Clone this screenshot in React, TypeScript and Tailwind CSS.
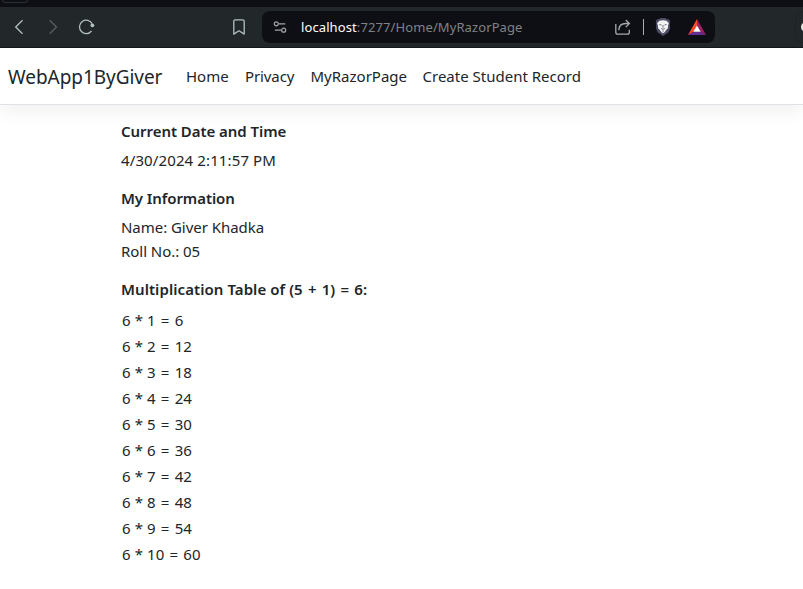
import React from "react";

const links = [
  { label: "Home", box: "w-[43px]" },
  { label: "Privacy", box: "w-[49.5px] tracking-[-0.1px]" },
  { label: "MyRazorPage", box: "w-[96px]" },
  { label: "Create Student Record", box: "w-[159px]" },
];

function BrowserBar() {
  return (
    <header className="h-12 bg-[#0e0f14] text-[#b1bec2]">
      <div className="flex h-[7px] items-start">
        <div className="ml-0.5 h-[3px] w-[26px] rounded-b-md border-x border-b border-[#2a2f33]" />
      </div>
      <div className="flex h-10 items-center overflow-hidden bg-[#22282a]">
        <svg className="ml-[11px] h-4 w-4 shrink-0" viewBox="0 0 16 16" fill="none" stroke="currentColor" strokeWidth="1.3">
          <path d="M11.5 1.2 4.7 8l6.8 6.8" />
        </svg>
        <svg className="ml-[18px] h-4 w-4 shrink-0 text-[#596063]" viewBox="0 0 16 16" fill="none" stroke="currentColor" strokeWidth="1.3">
          <path d="m4.7 1.2 6.8 6.8-6.8 6.8" />
        </svg>
        <svg className="ml-[17px] h-4 w-[18px] shrink-0" viewBox="0 0 18 16" fill="none" stroke="currentColor" strokeWidth="1.3">
          <path d="M14.1 4.6A6.7 6.7 0 1 0 13.5 12" />
          <circle cx="14.4" cy="6.3" r="1.9" fill="currentColor" stroke="none" />
        </svg>
        <svg className="ml-[137px] h-4 w-3 shrink-0" viewBox="0 0 12 16" fill="none" stroke="currentColor" strokeWidth="1.3" strokeLinejoin="round">
          <path d="M.8 15.1V2.3Q.8.8 2.3.8h7.4q1.5 0 1.5 1.5v12.8L6 11.8Z" />
        </svg>
        <div className="ml-[17px] flex h-8 w-[453px] shrink-0 items-center rounded-lg bg-[#0e0f14]">
          <svg className="ml-[11px] h-3 w-[14px] shrink-0 text-[#a0a5a8]" viewBox="0 0 14 12" fill="none" stroke="currentColor" strokeWidth="1.2">
            <circle cx="3.3" cy="2.8" r="2" />
            <path d="M6 2.8h6.2M1.8 9.2H8" />
            <circle cx="10.7" cy="9.2" r="2" />
          </svg>
          <div className="ml-[14px] w-[310px] whitespace-nowrap text-[13px] leading-5 tracking-[0.1px] text-[#7f8386]">
            <span className="text-white">localhost</span>:7277/Home/MyRazorPage
          </div>
          <svg className="ml-[4px] h-4 w-4 shrink-0 text-[#a3a9ac]" viewBox="0 0 16 16" fill="none" stroke="currentColor" strokeWidth="1.3">
            <path d="M.8 5v8.2q0 2 2 2h9.5q2 0 2-2v-2.5" />
            <path d="M3.8 11.2c.2-4.2 3-6.7 6.8-6.7H14M10.8 1l3.6 3.5-3.6 3.6" />
          </svg>
          <div className="ml-[12px] h-4 w-px bg-[#aaaeb0]" />
          <svg className="ml-[11px] h-[18px] w-4 shrink-0" viewBox="0 0 16 18">
            <path d="m4 1 1.8-1h4.4L12 1l2.2.5 1.2 2.3-.6 1.5.2 5-1.5 4L8 18l-5.5-3.7-1.5-4 .2-5-.6-1.5 1.2-2.3Z" fill="#4b4d62" />
            <path d="m4.5 2.8 3.5-.5 3.5.5 2.4 2.4-.8 2-.2 3-1.6 1.5-1.4 2.2L8 15.2l-1.9-1.3-1.4-2.2-1.6-1.5-.2-3-.8-2Z" fill="#f3f3f5" />
            <path d="m4.4 6.5 2.1.5M11.6 6.5 9.5 7M8 7v2.6M6.2 10.4l1.8.9 1.8-.9M7.2 13h1.6" fill="none" stroke="#4b4d62" strokeWidth=".8" />
          </svg>
          <svg className="ml-[17px] h-4 w-[18px] shrink-0" viewBox="0 0 18 16">
            <path d="M9 0 0 16l6-3.5L9 7Z" fill="#ff4b25" />
            <path d="m9 0 9 16-6-3.5L9 7Z" fill="#9e1f63" />
            <path d="M0 16h18l-6-3.5H6Z" fill="#662d91" />
            <path d="m9 6.4 3.7 6.3H5.3Z" fill="#fff" />
          </svg>
        </div>
        <div className="ml-[80px] flex h-8 w-8 shrink-0 items-center rounded-lg border border-[#1d2225]">
          <div className="ml-[5px] h-[10px] w-[10px] rounded-full bg-[#e6e8db]" />
        </div>
      </div>
      <div className="h-px bg-[#16191c]" />
    </header>
  );
}

function SiteNav() {
  return (
    <nav className="flex h-[57px] items-center border-b border-[#dee2e6] pl-2 shadow-[0_8px_16px_rgba(0,0,0,0.05)]">
      <div className="w-[154px] whitespace-nowrap pt-0.5 text-[19px] leading-[30px] tracking-[-0.05px]">WebApp1ByGiver</div>
      <div className="ml-6 flex gap-4 whitespace-nowrap leading-6">
        {links.map((link) => (
          <div key={link.label} className={link.box}>{link.label}</div>
        ))}
      </div>
    </nav>
  );
}

function Op({ children }: { children: string }) {
  return <span className="mx-[1.2px]">{children}</span>;
}

export default function App() {
  return (
    <div className="h-[589px] overflow-hidden bg-white font-['Noto_Sans','Open_Sans',sans-serif] text-[15px] text-[#212529]">
      <BrowserBar />
      <SiteNav />
      <main className="pl-[121px] pt-[17px] leading-6">
        <h1 className="mb-[7px] font-semibold leading-[19px] tracking-[-0.05px]">Current Date and Time</h1>
        <p className="mb-[17px] tracking-[0.12px]">4/30/2024 2:11:57 PM</p>
        <h1 className="mb-[7px] font-semibold leading-[19px] tracking-[-0.08px]">My Information</h1>
        <p className="mb-[17px] tracking-[-0.04px]">
          Name: Giver Khadka
          <br />
          Roll No.: 05
        </p>
        <h1 className="mb-2 font-semibold leading-[19px] tracking-[0.07px]">
          Multiplication Table of (5 <Op>+</Op> 1) <Op>=</Op> 6:
        </h1>
        <div className="pl-px">
          {Array.from({ length: 10 }, (_, i) => (
            <div key={i} className="h-[26px] pt-px tracking-[0.08px]">
              6 * {i + 1} <Op>=</Op> {6 * (i + 1)}
            </div>
          ))}
        </div>
      </main>
    </div>
  );
}
